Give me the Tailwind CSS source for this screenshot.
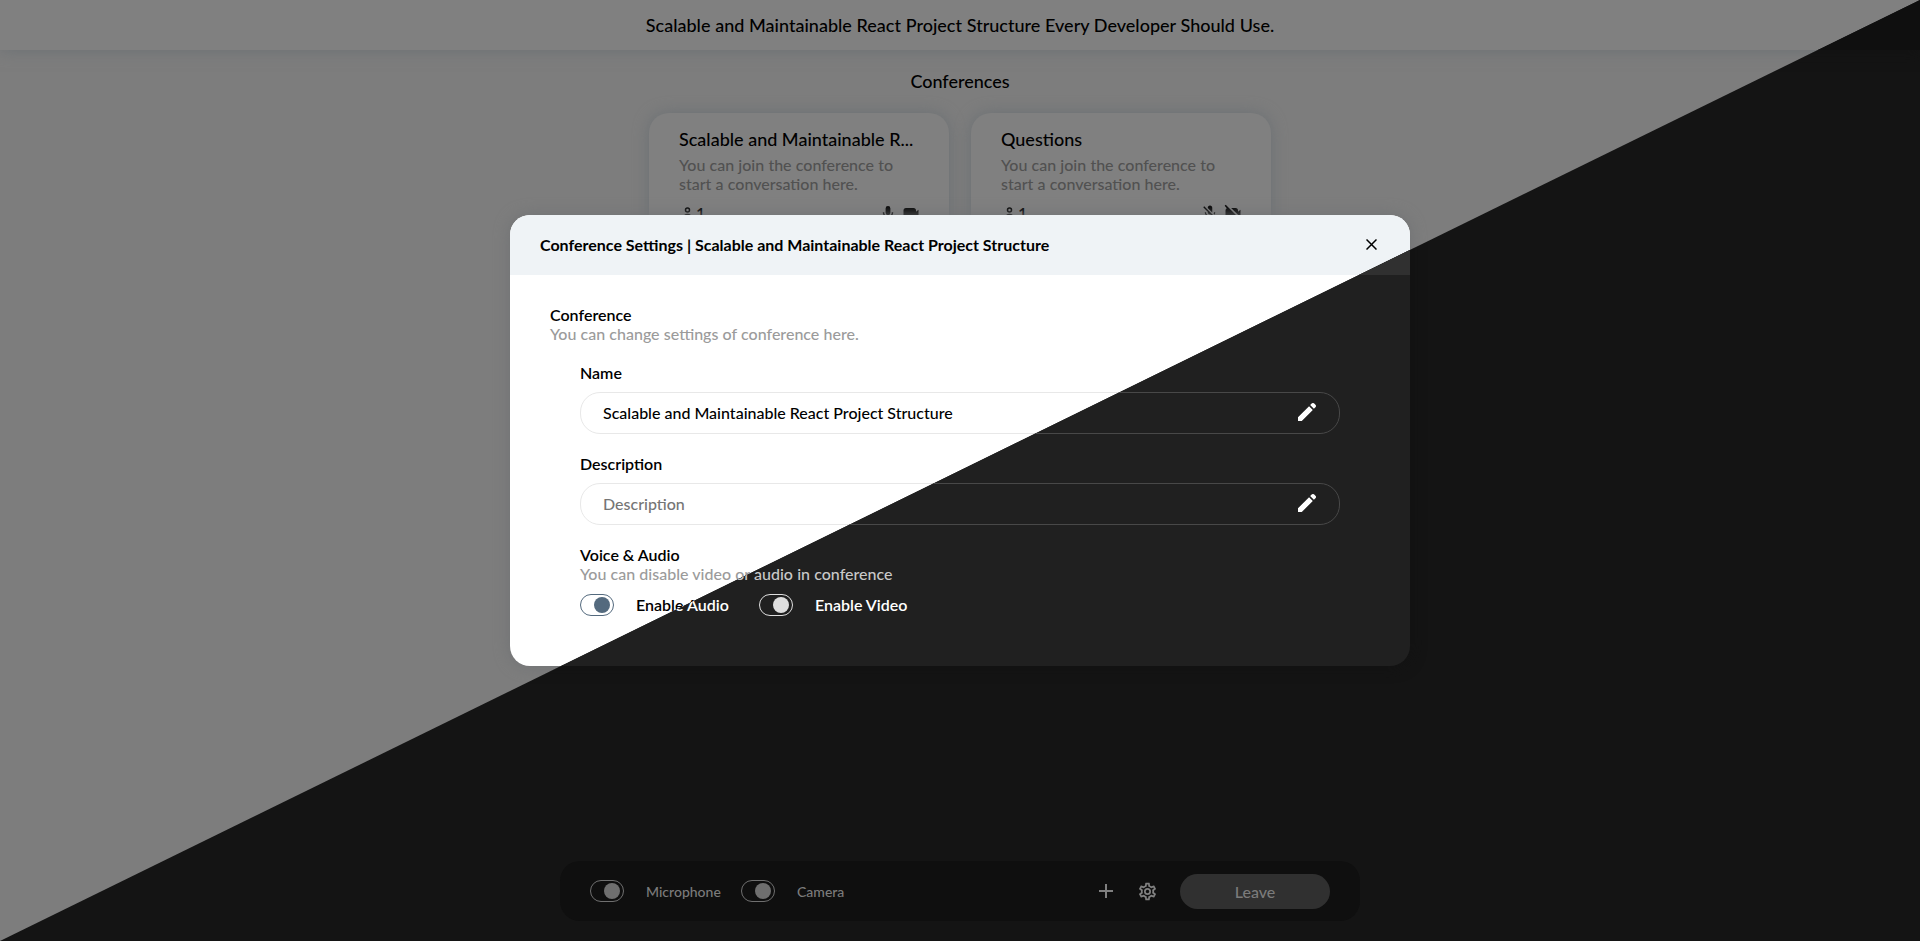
<!DOCTYPE html>
<html lang="en">
<head>
<meta charset="utf-8">
<title>Conference Settings</title>
<script src="https://cdn.jsdelivr.net/npm/@tailwindcss/browser@4"></script>
</head>
<body class="relative h-[941px] w-[1920px] overflow-hidden font-[Lato,sans-serif]">
<svg class="hidden">
  <symbol id="person" viewBox="0 0 16 20"><circle cx="8.500" cy="7" r="2" fill="none" stroke="currentColor" stroke-width="1.500"/><path d="M5.200 18v-3.500a3.300 3 0 0 1 6.600 0v3.500" fill="none" stroke="currentColor" stroke-width="1.500"/></symbol>
  <symbol id="mic" viewBox="0 0 24 24"><path fill="currentColor" d="M12 15a3.200 3.200 0 0 0 3.200-3.200V6a3.200 3.200 0 0 0-6.400 0v5.800A3.200 3.200 0 0 0 12 15zm5-4a5 5 0 0 1-10 0H5a7 7 0 0 0 6 6.900V21h2v-3.100A7 7 0 0 0 19 11z"/></symbol>
  <symbol id="mic-off" viewBox="0 0 24 24"><path fill="currentColor" d="M19 11h-1.700c0 .74-.16 1.430-.43 2.050l1.230 1.230c.56-.98.900-2.090.900-3.280zm-4.020.17c0-.06.020-.11.020-.17V5c0-1.660-1.340-3-3-3S9 3.340 9 5v.18l5.980 5.990zM4.270 3L3 4.270l6.010 6.010V11c0 1.660 1.330 3 2.990 3 .22 0 .44-.03.65-.08l1.660 1.660c-.71.33-1.500.52-2.310.52-2.760 0-5.300-2.100-5.300-5.100H5c0 3.410 2.720 6.230 6 6.720V21h2v-3.280c.91-.13 1.770-.45 2.540-.9L19.730 21 21 19.730 4.270 3z"/></symbol>
  <symbol id="cam" viewBox="0 0 24 24"><path fill="currentColor" d="M18 10.500V9a3 3 0 0 0-3-3H6a3 3 0 0 0-3 3v8a3 3 0 0 0 3 3h9a3 3 0 0 0 3-3v-1.500l3 2.500V8z"/></symbol>
  <symbol id="cam-off" viewBox="0 0 24 24"><path fill="currentColor" d="M18 10.500V9a3 3 0 0 0-3-3H9.800L21 17.180V8zM3.270 2L2 3.270 4.500 6.300A3 3 0 0 0 3 9v8a3 3 0 0 0 3 3h9a3 3 0 0 0 2-.8L19.730 21 21 19.730 3.270 2z"/></symbol>
  <symbol id="pen" viewBox="0 0 24 24"><path fill="currentColor" d="M3 17.250V21h3.750L17.810 9.940l-3.750-3.750L3 17.250zM20.710 7.040a1.800 1.800 0 0 0 0-2l-1.750-1.750a1.800 1.800 0 0 0-2 0l-1.830 1.830 3.750 3.750 1.830-1.830z"/></symbol>
  <symbol id="gear" viewBox="0 0 24 24"><path fill="currentColor" d="M19.430 12.980c.04-.32.070-.64.070-.98s-.03-.66-.07-.98l2.110-1.650c.19-.15.240-.42.120-.64l-2-3.460a.5.5 0 0 0-.61-.22l-2.490 1c-.52-.4-1.080-.73-1.690-.98l-.38-2.650A.49.49 0 0 0 14 2h-4a.49.49 0 0 0-.49.420l-.38 2.650c-.61.25-1.170.59-1.690.98l-2.490-1a.5.5 0 0 0-.61.220l-2 3.460c-.13.22-.07.49.120.64l2.110 1.650c-.04.32-.07.650-.07.980s.03.660.070.980l-2.110 1.650a.49.49 0 0 0-.12.640l2 3.460c.12.220.390.300.610.220l2.490-1c.52.400 1.080.730 1.690.980l.38 2.650c.03.240.240.420.490.420h4c.25 0 .46-.18.490-.42l.38-2.650c.61-.25 1.170-.59 1.690-.98l2.490 1c.23.090.490 0 .61-.22l2-3.460a.5.5 0 0 0-.12-.64l-2.110-1.650zm-1.980-1.710c.04.31.050.520.050.730s-.02.430-.05.730l-.14 1.130.89.700 1.080.840-.7 1.210-1.270-.51-1.040-.42-.9.680c-.43.320-.84.560-1.250.730l-1.060.430-.16 1.130-.2 1.350h-1.400l-.19-1.350-.16-1.130-1.060-.43c-.43-.18-.83-.41-1.230-.71l-.91-.7-1.060.430-1.270.510-.7-1.210 1.080-.84.890-.7-.14-1.130c-.03-.31-.05-.54-.05-.74s.02-.43.050-.73l.14-1.130-.89-.7-1.080-.84.700-1.210 1.270.510 1.040.420.900-.68c.43-.32.840-.56 1.250-.73l1.060-.43.160-1.130.2-1.350h1.390l.19 1.350.16 1.130 1.060.430c.43.180.830.410 1.230.710l.91.700 1.060-.43 1.270-.51.700 1.210-1.070.850-.89.700.14 1.130zM12 8a4 4 0 1 0 0 8 4 4 0 0 0 0-8zm0 6a2 2 0 1 1 0-4 2 2 0 0 1 0 4z"/></symbol>
</svg>

<!-- Light theme; the dark theme is a clone of it clipped to the lower-right triangle -->
<div id="screen" class="absolute inset-0 bg-[var(--page)] text-[var(--text)] [--page:#7d7d7d] [--bar:#808080] [--shadow:#6b7074] [--text:#000] [--muted:#9b9b9b] [--dim:#515151] [--head:#eff3f6] [--modal:#fff] [--line:#e8e8e8] [--accent:#546a7e] [--edge:#707274]
 data-[theme=dark]:[--page:#141414] data-[theme=dark]:[--bar:#0f0f0f] data-[theme=dark]:[--shadow:#121212] data-[theme=dark]:[--text:#fff] data-[theme=dark]:[--muted:#c9c9c9] data-[theme=dark]:[--dim:#777] data-[theme=dark]:[--head:#303030] data-[theme=dark]:[--modal:#202020] data-[theme=dark]:[--line:#484848] data-[theme=dark]:[--accent:#dedede] data-[theme=dark]:[--edge:#121212] data-[theme=dark]:[clip-path:polygon(100%_0,100%_100%,0_100%)]">
  <div class="flex h-full flex-col items-center">
    <header class="flex h-[50px] w-full items-center justify-center bg-[var(--bar)] text-[18px] font-medium shadow-[0_0_15px_var(--shadow)]"><h1 class="[word-spacing:0.2px]">Scalable and Maintainable React Project Structure Every Developer Should Use.</h1></header>
    <h2 class="mt-[18px] text-[18px] leading-[27px] font-medium">Conferences</h2>
    <div class="mt-[18px] flex gap-[22px]">
      <section class="h-[130px] w-[300px] rounded-[20px] bg-[var(--bar)] px-[30px] pt-[15px] shadow-[0_0_15px_var(--shadow)]">
        <h3 class="text-[18px] leading-[22px] font-medium">Scalable and Maintainable R...</h3>
        <p class="mt-[5px] text-[16px] leading-[19px] font-medium text-[var(--dim)] [word-spacing:0.15px]">You can join the conference to<br>start a conversation here.</p>
        <div class="mt-[8px] flex h-6 items-center text-[16px] font-semibold"><svg class="h-5 w-4"><use href="#person"/></svg><span class="ml-px">1</span><svg class="ml-auto size-[18px]"><use href="#mic"/></svg><svg class="mr-[-2px] ml-[4px] size-[20px]"><use href="#cam"/></svg></div>
      </section>
      <section class="h-[130px] w-[300px] rounded-[20px] bg-[var(--bar)] px-[30px] pt-[15px] shadow-[0_0_15px_var(--shadow)]">
        <h3 class="text-[18px] leading-[22px] font-medium">Questions</h3>
        <p class="mt-[5px] text-[16px] leading-[19px] font-medium text-[var(--dim)] [word-spacing:0.15px]">You can join the conference to<br>start a conversation here.</p>
        <div class="mt-[8px] flex h-6 items-center text-[16px] font-semibold"><svg class="h-5 w-4"><use href="#person"/></svg><span class="ml-px">1</span><svg class="ml-auto size-[18px]"><use href="#mic-off"/></svg><svg class="mr-[-2px] ml-[4px] size-[20px]"><use href="#cam-off"/></svg></div>
      </section>
    </div>
    <footer class="mt-auto mb-[20px] flex h-[60px] w-[800px] items-center rounded-[20px] bg-[#0f0f0f] px-[30px] text-[14px] font-medium text-[#7b7b7b]">
      <span class="flex h-[22px] w-[34px] items-center justify-end rounded-full border border-[#6f6f6f] pr-[3px]"><i class="size-4 rounded-full bg-[#6f6f6f]"></i></span>
      <span class="ml-[22px] w-[95px]">Microphone</span>
      <span class="flex h-[22px] w-[34px] items-center justify-end rounded-full border border-[#6f6f6f] pr-[3px]"><i class="size-4 rounded-full bg-[#6f6f6f]"></i></span>
      <span class="ml-[22px]">Camera</span>
      <svg class="ml-auto size-[14px] text-[#808080]" viewBox="0 0 14 14"><path d="M7 0v14M0 7h14" stroke="currentColor" stroke-width="2"/></svg>
      <svg class="ml-[24px] size-[21px] text-[#808080]"><use href="#gear"/></svg>
      <button class="ml-[22px] h-[35px] w-[150px] rounded-full bg-[#303030] pt-[2px] text-[16px] font-medium">Leave</button>
    </footer>
  </div>

  <div class="absolute top-[215px] left-[510px] h-[451px] w-[900px] overflow-hidden rounded-[20px] bg-[var(--modal)] shadow-[0_0_15px_var(--edge)]">
    <div class="flex h-[60px] items-center bg-[var(--head)] px-[30px]">
      <h2 class="text-[16px] font-bold">Conference Settings | Scalable and Maintainable React Project Structure</h2>
      <svg class="mr-[3px] mb-[2px] ml-auto size-[11px]" viewBox="0 0 11 11"><path d="M.5.5l10 10M10.500.5l-10 10" stroke="currentColor" stroke-width="1.500"/></svg>
    </div>
    <div class="px-[40px] pt-[30px] text-[16px] leading-[19px] font-semibold">
      <h3>Conference</h3>
      <p class="font-medium text-[var(--muted)] [word-spacing:0.15px]">You can change settings of conference here.</p>
      <div class="px-[30px] pt-[20px]">
        <h4>Name</h4>
        <div class="mt-[10px] flex h-[42px] w-[760px] items-center rounded-[20px] border border-[var(--line)] pr-[20px] pl-[22px]"><span class="mb-[2px] font-medium">Scalable and Maintainable React Project Structure</span><svg class="mb-[2px] ml-auto size-[24px]"><use href="#pen"/></svg></div>
        <h4 class="mt-[20px]">Description</h4>
        <div class="mt-[10px] flex h-[42px] w-[760px] items-center rounded-[20px] border border-[var(--line)] pr-[20px] pl-[22px]"><span class="mb-[2px] font-medium text-[#757575]">Description</span><svg class="mb-[2px] ml-auto size-[24px]"><use href="#pen"/></svg></div>
        <h4 class="mt-[20px]">Voice &amp; Audio</h4>
        <p class="font-medium text-[var(--muted)] [word-spacing:0.15px]">You can disable video or audio in conference</p>
        <div class="mt-[11px] flex items-center">
          <span class="flex h-[22px] w-[34px] items-center justify-end rounded-full border border-[var(--accent)] pr-[3px]"><i class="size-4 rounded-full bg-[var(--accent)]"></i></span>
          <span class="mb-[2px] ml-[22px] w-[123px]">Enable Audio</span>
          <span class="flex h-[22px] w-[34px] items-center justify-end rounded-full border border-[var(--accent)] pr-[3px]"><i class="size-4 rounded-full bg-[var(--accent)]"></i></span>
          <span class="mb-[2px] ml-[22px]">Enable Video</span>
        </div>
      </div>
    </div>
  </div>
</div>
<script>
  const dark = document.getElementById('screen').cloneNode(true);
  dark.removeAttribute('id');
  dark.dataset.theme = 'dark';
  document.body.append(dark);
</script>
</body>
</html>
